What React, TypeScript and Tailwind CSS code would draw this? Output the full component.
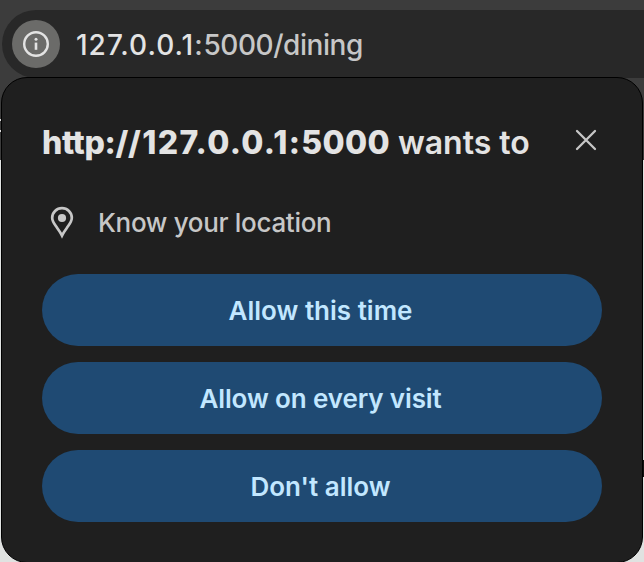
import React from "react";

const choices = [
  { label: "Allow this time", spacing: "tracking-[0px]" },
  { label: "Allow on every visit", spacing: "tracking-[-0.12px]" },
  { label: "Don't allow", spacing: "tracking-[0px]" },
];

function InfoIcon() {
  return (
    <svg width="28" height="28" viewBox="0 0 28 28" fill="none">
      <circle cx="14" cy="14" r="11.8" stroke="#e3e3e3" strokeWidth="2.4" />
      <rect x="12.7" y="12.6" width="2.6" height="7.2" fill="#e3e3e3" />
      <circle cx="14" cy="9.2" r="1.5" fill="#e3e3e3" />
    </svg>
  );
}

function PinIcon() {
  return (
    <svg width="24" height="34" viewBox="0 0 24 34" fill="none">
      <path
        d="M12 29.6C10.5 26.4 8.2 23.4 6 20.3C3.7 17.1 2.2 15 2.2 12A9.8 9.8 0 0 1 21.8 12C21.8 15 20.3 17.1 18 20.3C15.8 23.4 13.5 26.4 12 29.6Z"
        stroke="#c7c7c7"
        strokeWidth="2.7"
      />
      <circle cx="12" cy="12" r="4.1" fill="#c7c7c7" />
    </svg>
  );
}

function PermissionPrompt() {
  return (
    <section className="absolute left-[1px] top-[77px] h-[486px] w-[642px] rounded-[26px] border border-black bg-[#1f1f1f] px-[40px] pt-[41px]">
      <header className="flex h-[48px] items-center justify-between">
        <h1 className="whitespace-nowrap text-[32px] leading-[48px] text-[#e3e3e3]">
          <span className="font-extrabold tracking-[-0.35px]">http://</span>
          <span className="ml-[2px] font-extrabold tracking-[1.3px]">127.0.0.1:</span>
          <span className="font-extrabold tracking-[0.3px]">5000</span>
          <span className="font-semibold"> wants to</span>
        </h1>
        <button aria-label="Close" className="mr-[5px] mb-[7px]">
          <svg width="22" height="22" viewBox="0 0 22 22" fill="none">
            <path d="M2 2L20 20M20 2L2 20" stroke="#c7c7c7" strokeWidth="2.3" strokeLinecap="round" />
          </svg>
        </button>
      </header>
      <div className="mt-[36px] flex h-[40px] items-center gap-[24px] pl-[8px]">
        <PinIcon />
        <span className="text-[26px] font-[450] leading-[40px] tracking-[-0.32px] text-[#c7c7c7]">Know your location</span>
      </div>
      <div className="mt-[31px] flex flex-col gap-4">
        {choices.map((c) => (
          <button
            key={c.label}
            className={`flex h-[72px] items-center justify-center rounded-full bg-[#1f4a73] pr-[3px] text-[26px] font-semibold text-[#c2e7ff] ${c.spacing}`}
          >
            {c.label}
          </button>
        ))}
      </div>
    </section>
  );
}

export default function App() {
  return (
    <main className="relative flex h-[562px] w-[644px] flex-col overflow-hidden bg-[#e0e2e1] font-[Inter,'Liberation_Sans',sans-serif]">
      <div className="flex h-[160px] shrink-0 flex-col bg-[#3c3c3c] pt-[10px]">
        <div className="ml-[2px] flex h-[68px] items-center gap-[16px] rounded-l-full bg-[#282828] pl-[10px]">
          <div className="flex size-[48px] items-center justify-center rounded-full bg-[#6b6b69]">
            <InfoIcon />
          </div>
          <div className="whitespace-nowrap pt-[1px] text-[28px] font-[450] leading-[40px] text-[#c7c7c7]">
            <span className="tracking-[1px] text-[#e3e3e3]">127.0.0.1</span>
            <span className="tracking-[0.8px]">:</span>
            <span className="tracking-[-0.45px]">5000/dining</span>
          </div>
        </div>
        <div className="mt-[41px] h-[2px] w-[1px] bg-[#dcdcdc]" />
        <div className="mt-[9px] h-[2px] w-[1px] bg-[#dcdcdc]" />
      </div>
      <div className="flex grow flex-col items-end pt-[300px]">
        <div className="h-[17px] w-[2px] bg-[#151515]" />
      </div>
      <PermissionPrompt />
    </main>
  );
}
